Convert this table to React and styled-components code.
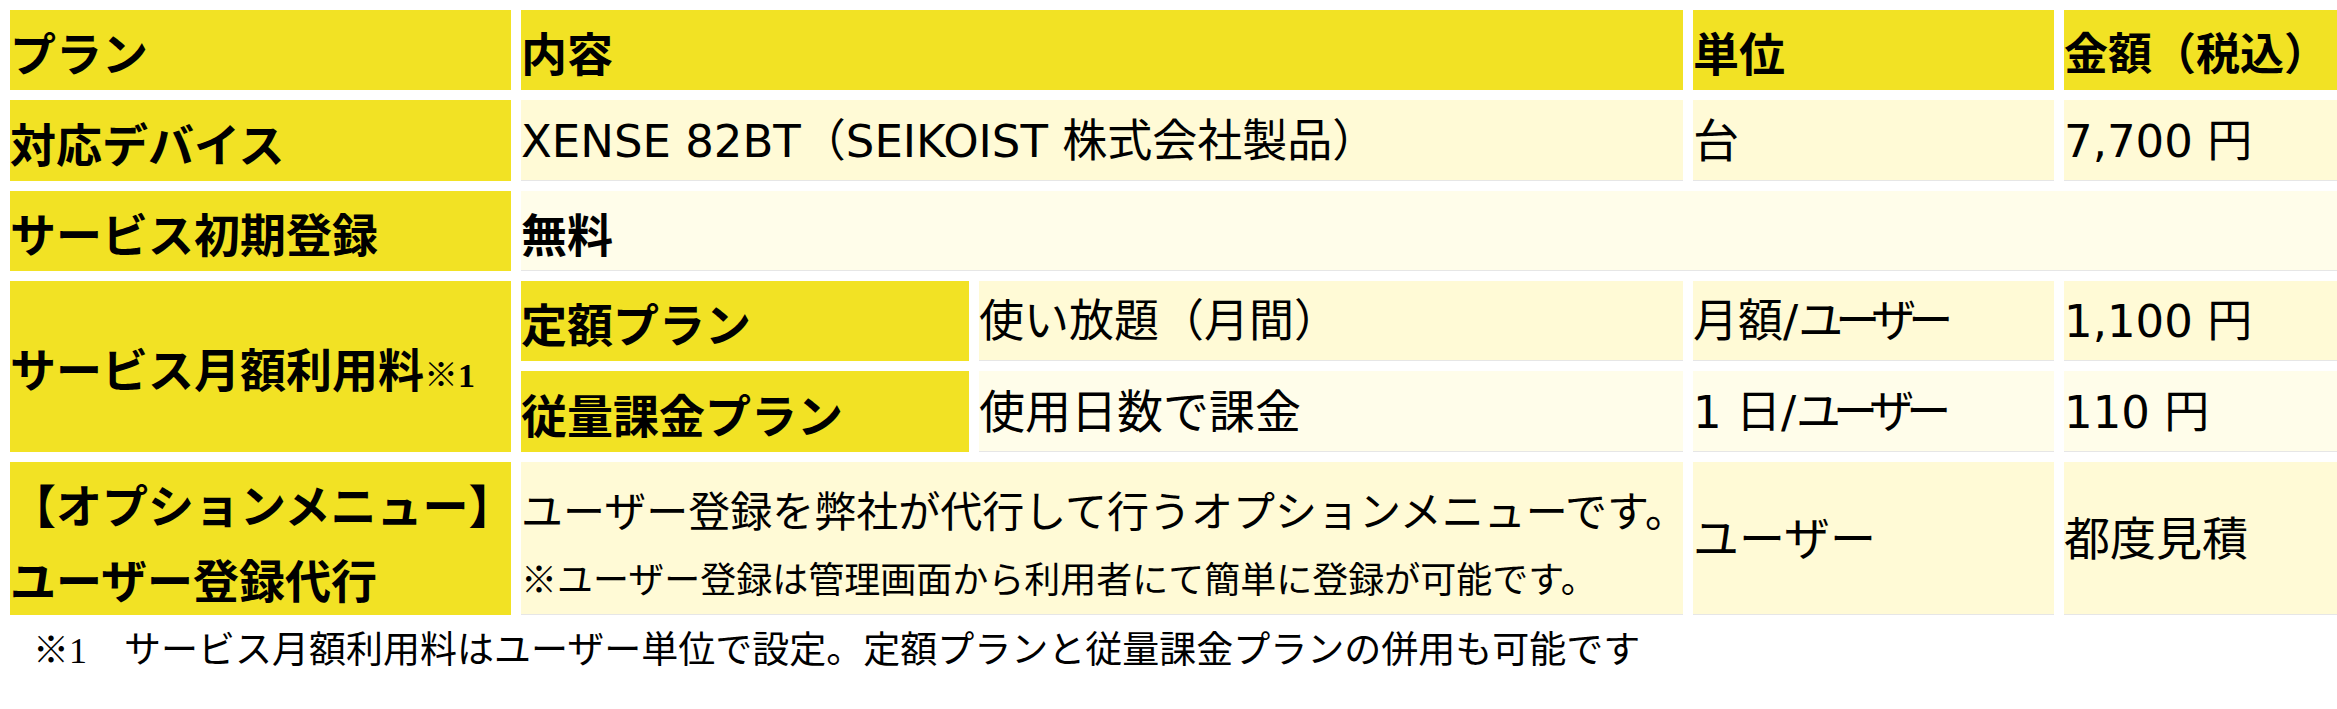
import React from 'react'
import styled, { createGlobalStyle } from 'styled-components'

const GlobalStyle = createGlobalStyle`
  html, body {
    margin: 0;
    padding: 0;
    background: #ffffff;
    overflow: hidden;
  }
`

const tones = {
  head: '#f2e224',
  odd: '#fffad6',
  even: '#fffdea',
}

const Page = styled.div`
  width: 2337px;
  overflow: hidden;
  color: #000;
`

const Sheet = styled.div`
  display: grid;
  grid-template-columns: 501px 448px 704px 361px 273px;
  grid-template-rows: 80px 81px 80px 80px 81px 153px;
  gap: 10px;
  padding: 10px 0 10px 10px;
  width: max-content;
`

const Cell = styled.div`
  box-sizing: border-box;
  display: flex;
  flex-direction: column;
  justify-content: center;
  align-items: flex-start;
  padding: 4px 0 0 0;
  grid-column: span ${(p) => p.$span || 1};
  grid-row: span ${(p) => p.$rows || 1};
  background: ${(p) => tones[p.$tone]};
  border-bottom: ${(p) => (p.$tone === 'head' ? 'none' : '1px solid #e6e6e6')};
  font-family: ${(p) =>
    p.$bold ? '"Noto Sans CJK JP", sans-serif' : '"DejaVu Sans", "Noto Sans CJK JP", sans-serif'};
  font-weight: ${(p) => (p.$bold ? 700 : 400)};
  font-size: ${(p) => p.$size || 46}px;
  line-height: 1.3;
  white-space: nowrap;
`

const Line = styled.span`
  display: block;
  font-size: ${(p) => p.$size || 46}px;
  line-height: ${(p) => p.$lh || 'normal'};
  font-family: "Noto Sans CJK JP", sans-serif;
`

const Tight = styled.span`
  letter-spacing: -8px;
`

const Stack = styled.div`
  display: flex;
  flex-direction: column;
  gap: 12px;
`

const Mark = styled.span`
  font-family: "Liberation Serif", "Noto Sans CJK JP", serif;
  font-size: ${(p) => p.$size || 34}px;
  font-weight: ${(p) => (p.$bold ? 700 : 400)};
`

const Footnote = styled.p`
  margin: 0 0 0 33px;
  font-family: "Noto Sans CJK JP", sans-serif;
  font-size: 37px;
  line-height: 44px;
  white-space: nowrap;
`

export default function App() {
  return (
    <Page>
      <GlobalStyle />
      <Sheet>
        <Cell $tone="head" $bold>プラン</Cell>
        <Cell $tone="head" $bold $span={2}>内容</Cell>
        <Cell $tone="head" $bold>単位</Cell>
        <Cell $tone="head" $bold $size={44}>金額（税込）</Cell>

        <Cell $tone="head" $bold>対応デバイス</Cell>
        <Cell $tone="odd" $span={2} $size={45}>XENSE 82BT（SEIKOIST 株式会社製品）</Cell>
        <Cell $tone="odd">台</Cell>
        <Cell $tone="odd" $size={45}>7,700 円</Cell>

        <Cell $tone="head" $bold>サービス初期登録</Cell>
        <Cell $tone="even" $bold $span={4}>無料</Cell>

        <Cell $tone="head" $bold $rows={2}>
          <span>
            サービス月額利用料<Mark $bold>※1</Mark>
          </span>
        </Cell>
        <Cell $tone="head" $bold>定額プラン</Cell>
        <Cell $tone="odd" $size={45}>使い放題（月間）</Cell>
        <Cell $tone="odd" $size={45}>
          <span>
            月額/<Tight>ユーザー</Tight>
          </span>
        </Cell>
        <Cell $tone="odd" $size={45}>1,100 円</Cell>

        <Cell $tone="head" $bold>従量課金プラン</Cell>
        <Cell $tone="even">使用日数で課金</Cell>
        <Cell $tone="even" $size={45}>
          <span>
            1 日/<Tight>ユーザー</Tight>
          </span>
        </Cell>
        <Cell $tone="even" $size={45}>110 円</Cell>

        <Cell $tone="head" $bold>
          <Line $lh="75px">【オプションメニュー】</Line>
          <Line $lh="75px">ユーザー登録代行</Line>
        </Cell>
        <Cell $tone="odd" $span={2}>
          <Stack>
            <Line $size={42}>ユーザー登録を弊社が代行して行うオプションメニューです。</Line>
            <Line $size={36}>※ユーザー登録は管理画面から利用者にて簡単に登録が可能です。</Line>
          </Stack>
        </Cell>
        <Cell $tone="odd">ユーザー</Cell>
        <Cell $tone="odd">都度見積</Cell>
      </Sheet>
      <Footnote>
        <Mark $size={36}>※1</Mark>　サービス月額利用料はユーザー単位で設定。定額プランと従量課金プランの併用も可能です
      </Footnote>
    </Page>
  )
}
